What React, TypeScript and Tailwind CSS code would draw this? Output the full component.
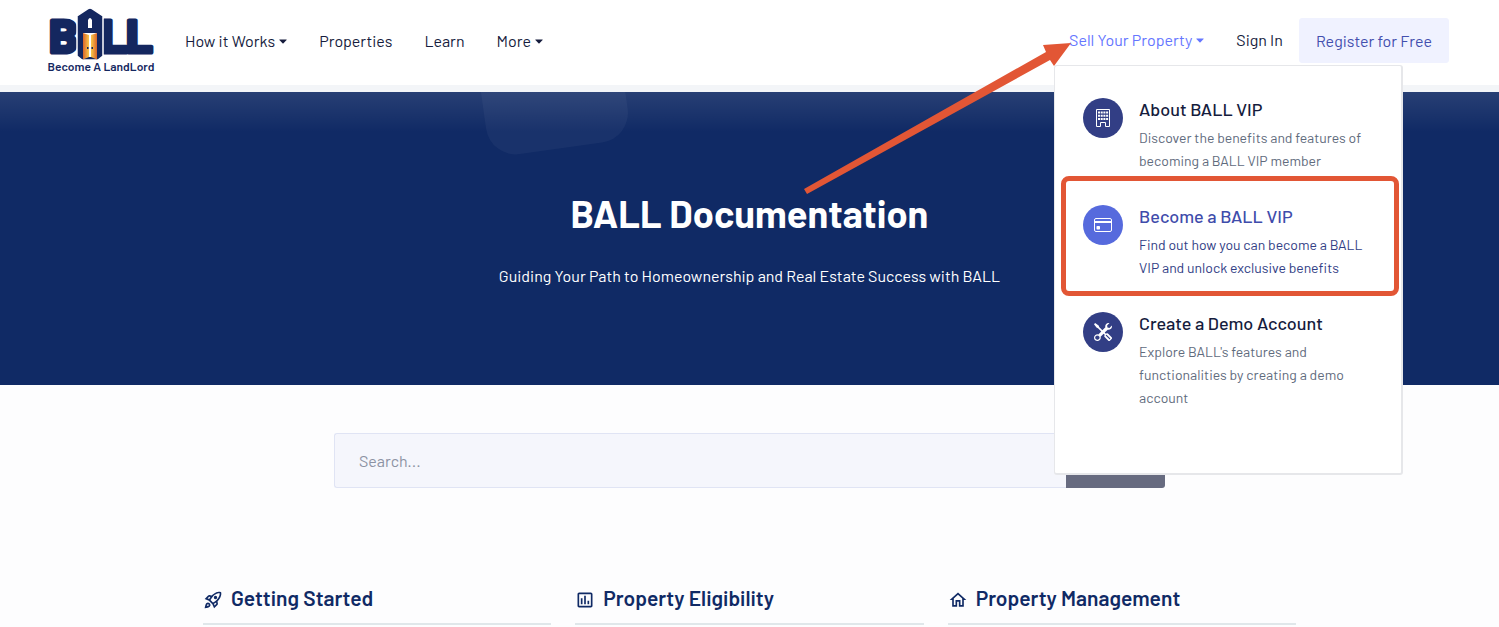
import type { ReactNode } from "react";
import { BsTools } from "react-icons/bs";
import { MdOutlineHome, MdOutlineInsertChart, MdOutlineRocketLaunch } from "react-icons/md";

function Caret() {
  return (
    <svg viewBox="0 0 8 5" className="h-[5px] w-2" fill="currentColor" aria-hidden="true">
      <path d="M0.6 0.5h6.8q.6 0 .2.5L4.5 4.3q-.5.4-1 0L.4 1Q0 .5.6.5z" />
    </svg>
  );
}

function BuildingIcon() {
  return (
    <svg viewBox="0 0 18 18" className="size-[18px]" aria-hidden="true">
      <path d="M2.500 .5h13v17h-4v-4h-5v4h-4z" fill="none" stroke="currentColor" />
      <path
        d="M4 2.500h2v2H4zM6.700 2.500h2v2h-2zM9.400 2.500h2v2h-2zM12.100 2.500h2v2h-2zM4 5.700h2v2H4zM6.700 5.700h2v2h-2zM9.400 5.700h2v2h-2zM12.100 5.700h2v2h-2zM4 8.900h2v2H4zM6.700 8.900h2v2h-2zM9.400 8.900h2v2h-2zM12.100 8.900h2v2h-2z"
        fill="currentColor"
      />
    </svg>
  );
}

function CardIcon() {
  return (
    <svg viewBox="0 0 18 18" className="size-[18px]" aria-hidden="true">
      <rect x=".5" y="2.500" width="17" height="13" rx="1.500" fill="none" stroke="currentColor" />
      <path d="M1 5h16v2H1z" fill="currentColor" />
      <rect x="2.500" y="10" width="3.500" height="3.500" rx=".8" fill="currentColor" />
    </svg>
  );
}

function Logo() {
  return (
    <a href="#" className="block w-26 shrink-0" aria-label="BALL, Become A LandLord">
      <svg viewBox="0 0 104 66" className="block h-[66px] w-26 overflow-visible">
        <defs>
          <linearGradient id="leftDoor">
            <stop offset="0" stopColor="#d9662b" />
            <stop offset="1" stopColor="#fcc94a" />
          </linearGradient>
          <linearGradient id="rightDoor">
            <stop offset="0" stopColor="#fcc94a" />
            <stop offset="1" stopColor="#d9662b" />
          </linearGradient>
        </defs>
        <g
          fill="#14275f"
          stroke="#14275f"
          strokeWidth="3"
          fontFamily="Barlow, Roboto, sans-serif"
          fontWeight="800"
          fontSize="47"
        >
          <text x="0" y="45">B</text>
          <text x="52" y="45">L</text>
          <text x="77" y="45">L</text>
        </g>
        <path
          d="M28 8 39 0.600q2-1 4 0L54 8v40l-5 4H33l-5-4z"
          fill="#14275f"
          stroke="#fff"
          strokeWidth="1.500"
        />
        <path d="M39 20v-8q2-4 4 0v8z" fill="#fff" />
        <path d="M34 25h14v24H34z" fill="#fff" />
        <path d="M34 25l6 2v22l-6 2.500z" fill="url(#leftDoor)" />
        <path d="M48 25l-6 2v22l6 2.500z" fill="url(#rightDoor)" />
        <path d="M38 39h1.500v2H38zM42.500 39H44v2h-1.500z" fill="#14275f" />
        <text
          x="52"
          y="63"
          textAnchor="middle"
          fill="#14275f"
          fontFamily="Barlow, Roboto, sans-serif"
          fontWeight="600"
          fontSize="12"
        >
          Become A LandLord
        </text>
      </svg>
    </a>
  );
}

type VipItemProps = {
  icon: ReactNode;
  title: string;
  text: string;
  active?: boolean;
};

function VipItem({ icon, title, text, active }: VipItemProps) {
  return (
    <a href="#" className="relative flex items-start gap-4">
      <span
        className={
          active
            ? "flex size-10 shrink-0 items-center justify-center rounded-full bg-[#566add] text-white"
            : "flex size-10 shrink-0 items-center justify-center rounded-full bg-[#323e85] text-white"
        }
      >
        {icon}
      </span>
      <span className="flex flex-col gap-[6px]">
        <span
          className={
            active
              ? "text-lg leading-[22px] font-medium text-[#3f4cab]"
              : "text-lg leading-[22px] font-medium text-[#161c3d]"
          }
        >
          {title}
        </span>
        <span
          className={
            active
              ? "text-sm leading-[23px] text-[#323e85]"
              : "text-sm leading-[23px] text-[#5f6b7d]"
          }
        >
          {text}
        </span>
      </span>
      {active && (
        <span className="absolute -top-[29px] -right-[26px] -bottom-[17px] -left-[22px] rounded-lg border-5 border-[#e25635]" />
      )}
    </a>
  );
}

function VipMenu() {
  return (
    <div className="absolute top-[37px] -left-[15px] z-10 flex w-[349px] flex-col gap-[33px] rounded-[3px] border border-[#e6e7ea] border-r-2 border-b-2 bg-white px-7 pt-8 pb-16">
      <VipItem
        icon={<BuildingIcon />}
        title="About BALL VIP"
        text="Discover the benefits and features of becoming a BALL VIP member"
      />
      <VipItem
        active
        icon={<CardIcon />}
        title="Become a BALL VIP"
        text="Find out how you can become a BALL VIP and unlock exclusive benefits"
      />
      <VipItem
        icon={<BsTools className="size-[18px]" />}
        title="Create a Demo Account"
        text="Explore BALL's features and functionalities by creating a demo account"
      />
    </div>
  );
}

function PointerArrow() {
  return (
    <svg
      viewBox="0 0 268 156"
      className="pointer-events-none absolute top-3 right-full z-20 h-[156px] w-[268px] max-w-none overflow-visible"
      fill="#e25635"
      aria-hidden="true"
    >
      <path d="M3 149 245 12 242 5l28-2-17 23-4-6L6 154z" />
    </svg>
  );
}

function Header() {
  return (
    <header className="relative z-10 flex h-[92px] items-start justify-between border-b-7 border-[#f3f5f8] bg-white pr-[50px] pl-[49px]">
      <div className="flex items-start gap-8">
        <div className="pt-2">
          <Logo />
        </div>
        <nav className="flex gap-8 pt-[29px] leading-6 text-[#161c3d]">
          <button type="button" className="flex items-center gap-1">
            How it Works <Caret />
          </button>
          <a href="#">Properties</a>
          <a href="#">Learn</a>
          <button type="button" className="flex items-center gap-1">
            More <Caret />
          </button>
        </nav>
      </div>
      <div className="flex items-start gap-4 leading-6">
        <div className="flex gap-8 pt-7">
          <div className="relative">
            <button type="button" className="flex items-center gap-1 text-[#6576ff]">
              Sell Your Property <Caret />
            </button>
            <VipMenu />
            <PointerArrow />
          </div>
          <a href="#" className="text-[#161c3d]">
            Sign In
          </a>
        </div>
        <a
          href="#"
          className="mt-[18px] rounded-[3px] border border-[#f0f2ff] bg-[#f0f2ff] px-4 pt-[10px] pb-[9px] text-[#434fae]"
        >
          Register for Free
        </a>
      </div>
    </header>
  );
}

function Hero() {
  return (
    <section className="relative flex h-[293px] flex-col items-center gap-[27px] overflow-hidden bg-[#102a65] pt-[97px] text-center text-white">
      <div className="absolute -top-20 left-[32%] h-[137px] w-[143px] -rotate-8 rounded-[30px] bg-white/4" />
      <div className="absolute inset-x-0 top-0 h-10 bg-linear-to-b from-white/10 to-transparent" />
      <h1 className="text-[38px] leading-12 font-bold">BALL Documentation</h1>
      <p className="leading-6">
        Guiding Your Path to Homeownership and Real Estate Success with BALL
      </p>
    </section>
  );
}

function Topic({ icon, title }: { icon: ReactNode; title: string }) {
  return (
    <section className="border-b-2 border-[#e0e7ea] pb-[13px] text-[#102a65]">
      <h2 className="flex items-center gap-2 text-[21px] leading-6 font-semibold">
        {icon}
        {title}
      </h2>
    </section>
  );
}

export default function App() {
  return (
    <div className="min-h-screen overflow-x-hidden bg-[#fdfdfe] font-['Barlow',Roboto,sans-serif] text-base">
      <Header />
      <main>
        <Hero />
        <form className="mx-auto mt-12 flex h-[55px] max-w-[831px]">
          <input
            type="text"
            aria-label="Search"
            placeholder="Search..."
            className="min-w-0 flex-1 rounded-l-[3px] border border-r-0 border-[#e0e4f4] bg-[#f5f6fc] px-6 placeholder:text-[#8c92a3]"
          />
          <button
            type="button"
            aria-label="Search"
            className="w-[99px] rounded-r-[3px] bg-[#676b80]"
          />
        </form>
        <div className="mx-auto mt-[98px] grid max-w-[1093px] grid-cols-3 gap-6">
          <Topic icon={<MdOutlineRocketLaunch className="mt-1 size-5" />} title="Getting Started" />
          <Topic
            icon={<MdOutlineInsertChart className="mt-1 size-5" />}
            title="Property Eligibility"
          />
          <Topic icon={<MdOutlineHome className="mt-1 size-5" />} title="Property Management" />
        </div>
      </main>
    </div>
  );
}
